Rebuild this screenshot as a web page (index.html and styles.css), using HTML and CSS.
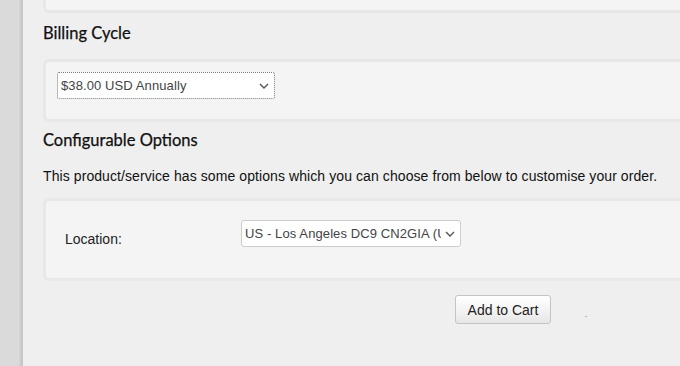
FILE: index.html
```html
<!DOCTYPE html>
<html>
<head>
<meta charset="utf-8">
<link rel="stylesheet" href="styles.css">
</head>
<body>
<div class="sidebar"></div>
<div class="main">
  <div class="panel panel-top"></div>

  <h2 class="heading heading-billing">Billing Cycle</h2>
  <div class="panel panel-billing">
    <div class="select select-focus select-billing" role="combobox">
      <span class="select-text">$38.00 USD Annually</span>
      <svg class="chevron" width="10" height="6" viewBox="0 0 10 6"><path d="M1 1 L5 5 L9 1" fill="none" stroke="#555" stroke-width="1.4"/></svg>
    </div>
  </div>

  <h2 class="heading heading-config">Configurable Options</h2>
  <p class="intro">This product/service has some options which you can choose from below to customise your order.</p>
  <div class="panel panel-options">
    <div class="option-row">
      <label class="option-label">Location:</label>
      <div class="select select-location" role="combobox">
        <span class="select-text">US - Los Angeles DC9 CN2GIA (USA)</span>
        <svg class="chevron" width="10" height="6" viewBox="0 0 10 6"><path d="M1 1 L5 5 L9 1" fill="none" stroke="#555" stroke-width="1.4"/></svg>
      </div>
    </div>
  </div>

  <div class="actions">
    <button class="btn-cart">Add to Cart</button>
    <span class="dot"></span>
  </div>
</div>
</body>
</html>
```
FILE: styles.css
```css
html, body {
  margin: 0;
  padding: 0;
}
body {
  display: flex;
  background: #efefef;
  overflow: hidden;
  font-family: "Liberation Sans", Arial, sans-serif;
  color: #222;
  height: 366px;
}
.sidebar {
  width: 23px;
  flex-shrink: 0;
  background: linear-gradient(to right, #dadada 0, #dadada 19px, #cfcfcf 20px, #c6c6c6 22px, #c8c8c8 23px);
}
.main {
  width: 920px;
  flex-shrink: 0;
  padding-left: 20px;
}
.panel {
  background: #f4f4f4;
  border: 3px solid #e8e8e8;
  border-radius: 6px;
}
.panel-top {
  height: 10px;
  border-top: none;
  border-radius: 0 0 6px 6px;
}
.heading {
  font-family: Lato, "Open Sans", sans-serif;
  font-weight: 400;
  font-size: 16.5px;
  line-height: 20px;
  color: #111;
  margin: 0;
  -webkit-text-stroke: 0.25px #111;
}
.heading-billing {
  margin-top: 10px;
  margin-bottom: 16px;
}
.panel-billing {
  padding: 10px 11px 20px;
}
.select {
  box-sizing: border-box;
  display: flex;
  align-items: center;
  height: 27px;
  background: #fff;
  border: 1px solid #ccc;
  border-radius: 3px;
  font-family: "Liberation Sans", Arial, sans-serif;
  font-size: 13px;
  color: #444;
  padding: 0 5px 0 3px;
  gap: 4px;
}
.select-text {
  flex: 1;
  min-width: 0;
  overflow: hidden;
  white-space: nowrap;
  letter-spacing: 0.1px;
}
.select-focus {
  border: 1px dotted #777;
  border-radius: 2px;
}
.select-billing {
  width: 218px;
}
.select-location {
  width: 220px;
}
.chevron {
  flex-shrink: 0;
}
.heading-config {
  margin-top: 8px;
  margin-bottom: 16px;
}
.intro {
  margin: 0 0 12px;
  font-size: 14px;
  line-height: 20px;
  letter-spacing: 0.085px;
  color: #111;
}
.panel-options {
  padding: 19px 19px 29px;
}
.option-row {
  display: flex;
  align-items: flex-start;
}
.option-label {
  width: 176px;
  padding-top: 9px;
  font-size: 14px;
  line-height: 20px;
  color: #222;
}
.actions {
  position: relative;
  display: flex;
  justify-content: center;
  margin-top: 14px;
}
.btn-cart {
  box-sizing: border-box;
  width: 96px;
  height: 29px;
  border: 1px solid #c4c4c4;
  border-radius: 3px;
  background: linear-gradient(to bottom, #ffffff 0%, #f4f4f4 50%, #e6e6e6 100%);
  font-family: "Liberation Sans", Arial, sans-serif;
  font-size: 14px;
  color: #222;
  padding: 0;
}
.dot {
  position: absolute;
  left: 542px;
  top: 21px;
  width: 2px;
  height: 1px;
  background: #b8b8b8;
}
```
